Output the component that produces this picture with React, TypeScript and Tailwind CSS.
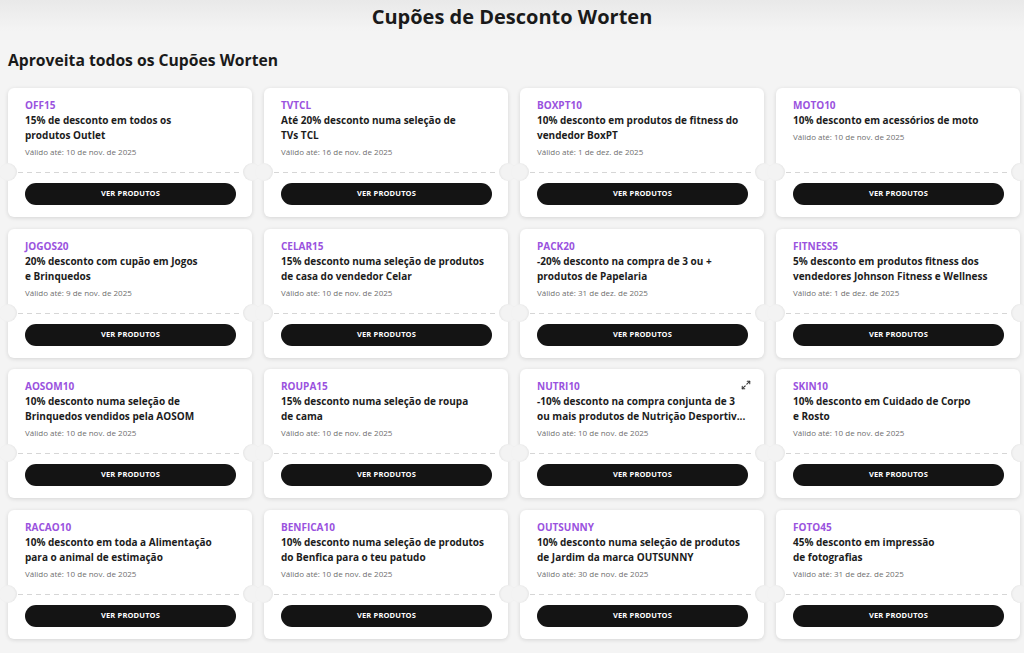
import { Maximize2 } from "lucide-react";

type Coupon = {
  code: string;
  lines: string[];
  date: string;
  expand?: boolean;
};

const coupons: Coupon[] = [
  { code: "OFF15", lines: ["15% de desconto em todos os", "produtos Outlet"], date: "10 de nov. de 2025" },
  { code: "TVTCL", lines: ["Até 20% desconto numa seleção de", "TVs TCL"], date: "16 de nov. de 2025" },
  { code: "BOXPT10", lines: ["10% desconto em produtos de fitness do", "vendedor BoxPT"], date: "1 de dez. de 2025" },
  { code: "MOTO10", lines: ["10% desconto em acessórios de moto"], date: "10 de nov. de 2025" },
  { code: "JOGOS20", lines: ["20% desconto com cupão em Jogos", "e Brinquedos"], date: "9 de nov. de 2025" },
  { code: "CELAR15", lines: ["15% desconto numa seleção de produtos", "de casa do vendedor Celar"], date: "10 de nov. de 2025" },
  { code: "PACK20", lines: ["-20% desconto na compra de 3 ou +", "produtos de Papelaria"], date: "31 de dez. de 2025" },
  { code: "FITNESS5", lines: ["5% desconto em produtos fitness dos", "vendedores Johnson Fitness e Wellness"], date: "1 de dez. de 2025" },
  { code: "AOSOM10", lines: ["10% desconto numa seleção de", "Brinquedos vendidos pela AOSOM"], date: "10 de nov. de 2025" },
  { code: "ROUPA15", lines: ["15% desconto numa seleção de roupa", "de cama"], date: "10 de nov. de 2025" },
  { code: "NUTRI10", lines: ["-10% desconto na compra conjunta de 3", "ou mais produtos de Nutrição Desportiv..."], date: "10 de nov. de 2025", expand: true },
  { code: "SKIN10", lines: ["10% desconto em Cuidado de Corpo", "e Rosto"], date: "10 de nov. de 2025" },
  { code: "RACAO10", lines: ["10% desconto em toda a Alimentação", "para o animal de estimação"], date: "10 de nov. de 2025" },
  { code: "BENFICA10", lines: ["10% desconto numa seleção de produtos", "do Benfica para o teu patudo"], date: "10 de nov. de 2025" },
  { code: "OUTSUNNY", lines: ["10% desconto numa seleção de produtos", "de Jardim da marca OUTSUNNY"], date: "30 de nov. de 2025" },
  { code: "FOTO45", lines: ["45% desconto em impressão", "de fotografias"], date: "31 de dez. de 2025" },
];

function CouponCard({ coupon }: { coupon: Coupon }) {
  return (
    <div className="relative flex h-[129px] flex-col rounded-[6px] bg-white shadow-[0_1px_4px_rgba(0,0,0,0.13)]">
      {coupon.expand && (
        <Maximize2 className="absolute right-[13px] top-[11px] h-[10px] w-[10px] text-[#333]" strokeWidth={2.5} />
      )}
      <div className="flex-1 pl-[17px] pr-4 pt-[11px]">
        <div className="text-[10px] font-bold leading-[13px] text-[#9a52de]">{coupon.code}</div>
        <div className="mt-px text-[10px] font-bold leading-[15px] text-[#1c1c1c]">
          {coupon.lines.map((l) => (
            <div key={l} className="whitespace-nowrap">
              {l}
            </div>
          ))}
        </div>
        <div className="mt-[2px] text-[8px] leading-[14px] text-[#6f6f6f]">Válido até: {coupon.date}</div>
      </div>

      {/* tear line + notches */}
      <div className="relative">
        <div className="mx-[10px] h-px bg-[repeating-linear-gradient(90deg,#d6d6d6_0_5px,transparent_5px_9px)]" />
        <div className="absolute -left-[9px] -top-[9px] h-[18px] w-[18px] rounded-full bg-[#f3f3f3] shadow-[inset_-1px_0_2px_rgba(0,0,0,0.06)]" />
        <div className="absolute -right-[9px] -top-[9px] h-[18px] w-[18px] rounded-full bg-[#f3f3f3] shadow-[inset_1px_0_2px_rgba(0,0,0,0.06)]" />
      </div>

      <div className="pb-[12px] pl-[17px] pr-4 pt-[10px]">
        <button className="flex h-[22px] w-full items-center justify-center rounded-full bg-[#141414] text-[7.5px] font-bold tracking-[0.02em] text-white">
          VER PRODUTOS
        </button>
      </div>
    </div>
  );
}

export default function App() {
  return (
    <div
      className="min-h-screen bg-[#f4f4f4] pb-10"
      style={{ fontFamily: '"Open Sans", "Noto Sans", sans-serif' }}
    >
      <div className="bg-gradient-to-b from-[#e9e9e9] to-[#f4f4f4] pt-[3px]">
        <h1 className="text-center text-[20px] font-bold leading-[28px] text-[#1a1a1a]">Cupões de Desconto Worten</h1>
      </div>

      <h2 className="mt-[17px] px-2 text-[15.7px] font-bold leading-[24px] text-[#1a1a1a]">
        Aproveita todos os Cupões Worten
      </h2>

      <div className="mt-4 grid grid-cols-4 gap-x-3 gap-y-[11.5px] pl-2 pr-1">
        {coupons.map((c) => (
          <CouponCard key={c.code} coupon={c} />
        ))}
      </div>
    </div>
  );
}
